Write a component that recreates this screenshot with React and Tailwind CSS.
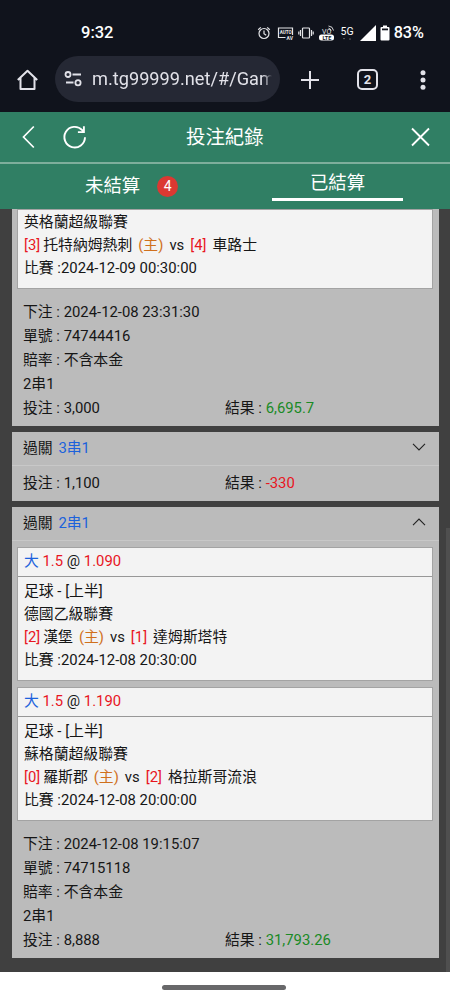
const settledBets = [
  {
    id: '74744416',
    combo: '2串1',
    open: true,
    scrolled: true,
    time: '2024-12-08 23:31:30',
    stake: '3,000',
    result: '6,695.7',
    legs: [
      {
        league: '英格蘭超級聯賽',
        home: '托特納姆熱刺',
        homeScore: 3,
        away: '車路士',
        awayScore: 4,
        kickoff: '2024-12-09 00:30:00',
      },
    ],
  },
  { id: '3x1', combo: '3串1', open: false, stake: '1,100', result: '-330' },
  {
    id: '74715118',
    combo: '2串1',
    open: true,
    time: '2024-12-08 19:15:07',
    stake: '8,888',
    result: '31,793.26',
    legs: [
      {
        odds: '1.090',
        league: '德國乙級聯賽',
        home: '漢堡',
        homeScore: 2,
        away: '達姆斯塔特',
        awayScore: 1,
        kickoff: '2024-12-08 20:30:00',
      },
      {
        odds: '1.190',
        league: '蘇格蘭超級聯賽',
        home: '羅斯郡',
        homeScore: 0,
        away: '格拉斯哥流浪',
        awayScore: 2,
        kickoff: '2024-12-08 20:00:00',
      },
    ],
  },
];

const StatusBar = () => (
  <div className="flex h-[56px] items-start justify-between pt-[22px] pr-[26px] pl-[81px] text-white">
    <span className="text-[16.5px] leading-[21px] font-medium">9:32</span>
    <div className="flex items-center">
      <svg width="122" height="20" viewBox="0 0 122 20" fill="none" stroke="#e4e5e8" strokeWidth="1.2">
        {/* alarm */}
        <circle cx="7" cy="10.5" r="5" />
        <path d="M7 7.5v3.2l2.2 1.6M1.2 6.8l2.6-2.4M12.8 6.8l-2.6-2.4" />
        {/* auto AV */}
        <path d="M28.5 14.5h-7V5h14v7" />
        <text x="22.7" y="11.2" fontSize="4.6" fontWeight="700" fill="#e4e5e8" stroke="none">AUTO</text>
        <text x="29.5" y="17.2" fontSize="5" fontWeight="700" fill="#e4e5e8" stroke="none">AV</text>
        {/* vibrate */}
        <rect x="45.5" y="5" width="7" height="10" rx="0.8" />
        <path d="M43.5 7v6M41.8 8.5v3M54.5 7v6M56.2 8.5v3" />
        {/* VoLTE */}
        <text x="65" y="10.5" fontSize="7" fill="#e4e5e8" stroke="none">VO</text>
        <path d="M71.5 5.2q2.3.3 2.6 2.7M71.5 3q4.5.3 5 4.5" strokeWidth="0.9" />
        <rect x="62" y="11.5" width="15" height="6" rx="2.5" fill="#fff" stroke="none" />
        <text x="65.5" y="16.6" fontSize="5.5" fontWeight="700" fill="#10131c" stroke="none">LTE</text>
        <text x="83.5" y="12" fontSize="10.5" fill="#fff" stroke="none">5G</text>
        <path d="M86 15l1 1.5 1-1.5zM92 16.5l1-1.5 1 1.5z" fill="#777" stroke="none" />
        {/* signal */}
        <path d="M119 2v16h-16z" fill="#fff" stroke="none" />
      </svg>
      <svg className="ml-[1px]" width="10" height="20" viewBox="0 0 10 20" fill="#fff">
        <path d="M3 2.5h4V4h1.5q1 0 1 1v11.5q0 1-1 1h-7q-1 0-1-1V5q0-1 1-1H3z" />
        <path d="M2 5.5h6v1.8H2z" fill="#10131c" />
      </svg>
      <span className="ml-[4px] text-[16.2px] leading-[21px] font-medium">83%</span>
    </div>
  </div>
);

const BrowserBar = () => (
  <div className="flex h-[56px] items-start text-[#e2e2e9]">
    <svg className="mt-[12px] ml-[16px] shrink-0" width="24" height="24" viewBox="0 0 24 24" fill="none" stroke="currentColor" strokeWidth="2">
      <path d="M1.8 12 11.5 2.8 21.2 12M4.5 9.8V21h14V9.8" strokeLinejoin="round" />
    </svg>
    <div className="ml-[15px] flex h-[46px] w-[225px] shrink-0 items-center rounded-full bg-[#252834] pr-[8px] pl-[9px]">
      <svg className="shrink-0" width="19" height="18" viewBox="0 0 19 18" fill="none" stroke="currentColor" strokeWidth="1.8">
        <circle cx="4" cy="4.5" r="2.5" />
        <path d="M8.5 4.5H17M2 12.5h7.5" />
        <circle cx="14" cy="12.8" r="2.6" />
      </svg>
      <span className="ml-[9px] w-[180px] mask-r-from-95% text-[18.2px] leading-[26px] whitespace-nowrap">
        m.tg99999.net/#/Gam
      </span>
    </div>
    <svg className="mt-[14px] ml-[20px] shrink-0" width="20" height="20" viewBox="0 0 20 20" stroke="currentColor" strokeWidth="2">
      <path d="M10 1v18M1 10h18" />
    </svg>
    <div className="mt-[13px] ml-[37px] flex h-[21px] w-[21px] shrink-0 items-center justify-center rounded-[5px] border-2 border-current text-[13px] font-bold">
      2
    </div>
    <svg className="mt-[13px] ml-[42px] shrink-0" width="6" height="22" viewBox="0 0 6 22" fill="currentColor">
      <circle cx="3" cy="3.8" r="2.5" />
      <circle cx="3" cy="11" r="2.5" />
      <circle cx="3" cy="18.2" r="2.5" />
    </svg>
  </div>
);

const PageHeader = () => (
  <div className="bg-[#307f64] text-white">
    <div className="flex h-[52px] items-center border-b-2 border-[#7eae9c]">
      <svg className="ml-[22px]" width="13" height="24" viewBox="0 0 13 24" fill="none" stroke="currentColor" strokeWidth="1.7">
        <path d="M11.8 1.5 1.5 12l10.3 10.5" />
      </svg>
      <svg className="ml-[27px]" width="26" height="26" viewBox="0 0 26 26" fill="none" stroke="currentColor" strokeWidth="1.9">
        <path d="M23 13.3a10.3 10.3 0 1 1-2.8-7.2l1.6 1.9M21.9 2.2v5.9h-6" />
      </svg>
      <h1 className="ml-[98px] pt-[1px] text-[19.4px] leading-[26px]">投注紀錄</h1>
      <svg className="ml-auto mr-[20px]" width="19" height="20" viewBox="0 0 19 20" stroke="currentColor" strokeWidth="1.8">
        <path d="m1 1.5 17 17M18 1.5l-17 17" />
      </svg>
    </div>
    <div className="flex h-[45px] text-[18.4px]">
      <div className="flex w-[225px] items-center pl-[85px]">
        <span className="pb-[2px]">未結算</span>
        <span className="ml-[17px] flex h-[21px] w-[21px] items-center justify-center rounded-full bg-[#db3832] text-[14px]">
          4
        </span>
      </div>
      <div className="flex flex-1 justify-center">
        <div className="h-[37px] w-[131px] border-b-[3px] border-white text-center leading-[37px]">已結算</div>
      </div>
    </div>
  </div>
);

const BetLeg = ({ leg }) => (
  <div className="mr-[6px] mb-[6px] ml-[5px] border border-[#a3a3a3] bg-[#f3f3f3]">
    {leg.odds && (
      <div className="h-[29px] border-b border-[#979797] pl-[6px] leading-[27px]">
        <span className="text-[#1c62dc]">大</span> <span className="text-[#e8161f]">1.5</span> @{' '}
        <span className="text-[#e8161f]">{leg.odds}</span>
      </div>
    )}
    <div className={leg.odds ? 'h-[103px] pt-[3px] pl-[6px] leading-[23px]' : 'pt-[1px] pb-[8px] pl-[6px] leading-[23px]'}>
      {leg.odds && <p>足球 - [上半]</p>}
      <p>{leg.league}</p>
      <p className="flex whitespace-pre">
        <span className="text-[#e8161f]">[{leg.homeScore}]</span>
        <span className="ml-[3px]">{leg.home}</span>
        <span className="ml-[6px] text-[#d0701c]">(主)</span>
        <span className="ml-[6px]">vs</span>
        <span className="ml-[6px] text-[#e8161f]">[{leg.awayScore}]</span>
        <span className="ml-[6px]">{leg.away}</span>
      </p>
      <p>比賽 :{leg.kickoff}</p>
    </div>
  </div>
);

const StakeRow = ({ bet }) => (
  <div className="flex">
    <span className="w-[202px]">投注 : {bet.stake}</span>
    <span>
      結果 :{' '}
      <span className={bet.result.startsWith('-') ? 'text-[#e8161f]' : 'text-[#198a25]'}>{bet.result}</span>
    </span>
  </div>
);

const BetCard = ({ bet }) => (
  <div className="mb-[6px] bg-[#bbbbbb]">
    {!bet.scrolled && (
      <div className="flex h-[34px] items-center justify-between border-b border-[#c8c8c8] pr-[13px] pl-[11px]">
        <span>
          過關 <span className="ml-[2px] text-[#1c62dc]">{bet.combo}</span>
        </span>
        <svg className="mb-[3px]" width="14" height="8" viewBox="0 0 14 8" fill="none" stroke="#222" strokeWidth="1.1">
          <path d={bet.open ? 'M1 7.2 7 1l6 6.2' : 'M1 .8 7 7l6-6.2'} />
        </svg>
      </div>
    )}
    {bet.open ? (
      <>
        <div className={bet.scrolled ? '' : 'pt-[6px]'}>
          {bet.legs.map((leg) => (
            <BetLeg key={leg.home} leg={leg} />
          ))}
        </div>
        <div className="pt-[5px] pb-[6px] pl-[11px] leading-[24px]">
          <p>下注 : {bet.time}</p>
          <p>單號 : {bet.id}</p>
          <p>賠率 : 不含本金</p>
          <p>{bet.combo}</p>
          <StakeRow bet={bet} />
        </div>
      </>
    ) : (
      <div className="h-[35px] pl-[11px] leading-[35px]">
        <StakeRow bet={bet} />
      </div>
    )}
  </div>
);

export default function App() {
  return (
    <div className="flex h-[1000px] w-[450px] flex-col overflow-hidden bg-white font-[Roboto,'Noto_Sans_CJK_TC',sans-serif]">
      <div className="h-[112px] shrink-0 bg-[#10131c]">
        <StatusBar />
        <BrowserBar />
      </div>
      <PageHeader />
      <div className="flex h-[763px] shrink-0 justify-between overflow-hidden bg-[#404040]">
        <div className="ml-[12px] w-[427px] text-[14.85px] text-[#161616]">
          {settledBets.map((bet) => (
            <BetCard key={bet.id} bet={bet} />
          ))}
        </div>
        {/* scrollbar thumb */}
        <div className="mt-[319px] w-[4px] bg-[#4f4f4f]" />
      </div>
      <div className="flex flex-1 justify-center pt-[13px] pr-[2px]">
        <div className="h-[5px] w-[124px] rounded-full bg-[#68686a]" />
      </div>
    </div>
  );
}
